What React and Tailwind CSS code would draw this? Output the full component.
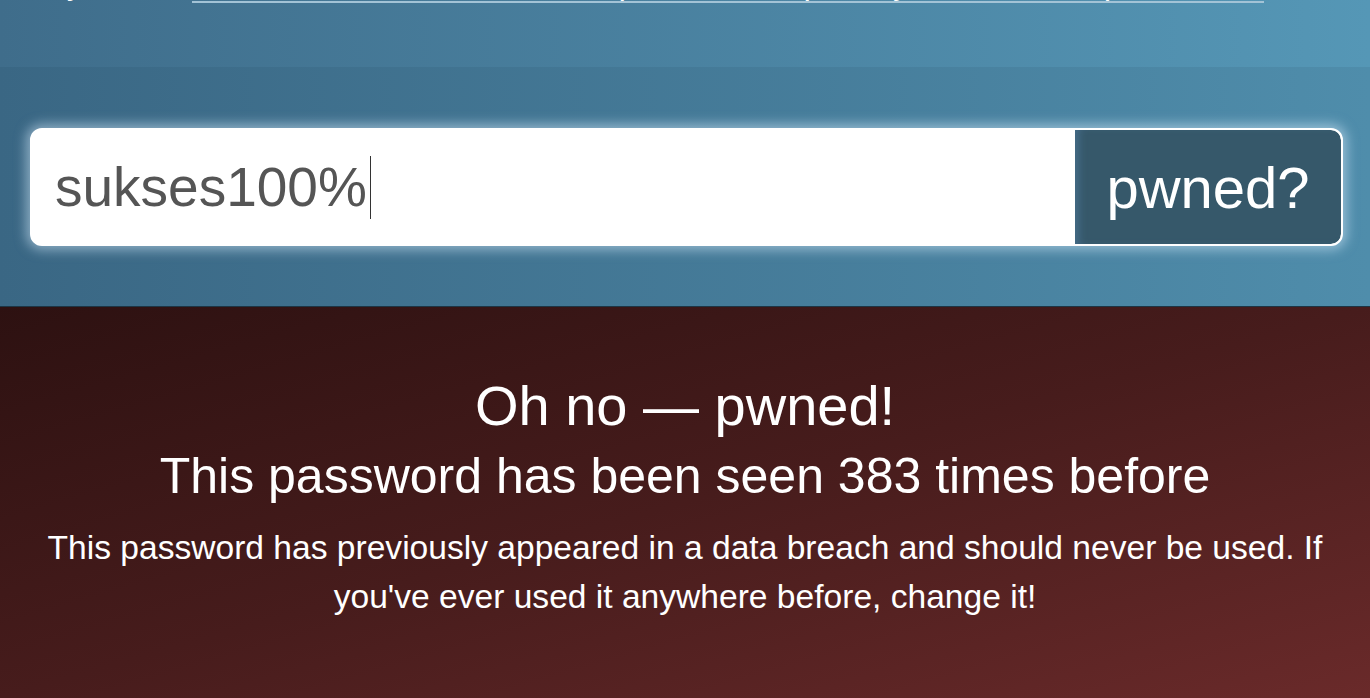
export default function App() {
  return (
    <div className="w-[1370px] h-[698px] overflow-hidden" style={{ fontFamily: '"Liberation Sans", Arial, sans-serif' }}>
      <div className="h-[67px] overflow-hidden bg-gradient-to-r from-[#3f6d8b] to-[#5597b6]">
        <p className="mt-[-37px] pl-[50px] text-[33.6px] leading-[40px] text-white whitespace-nowrap">
          systems. <a className="border-b-2 border-[#a3c3d6]">Read more about how HIBP protects the privacy of searched passwords</a>.
        </p>
      </div>
      <div className="h-[240px] border-b border-[#1c3545] bg-gradient-to-r from-[#3a6784] to-[#4f8dab] flex flex-col">
        <div className="mt-[61px] ml-[30px] mr-[27px] h-[118px] flex rounded-[12px] border-2 border-white bg-white shadow-[0_0_12px_4px_rgba(220,240,255,0.5)] overflow-hidden">
          <div className="flex-1 flex items-center pl-[23px] text-[55px] text-[#555555]">
            <span>sukses100%</span>
            <span className="w-[1px] h-[63px] bg-[#333333] ml-[3px]" />
          </div>
          <button className="w-[266px] bg-[#36586a] text-white text-[58px] flex items-center justify-center shadow-[inset_8px_0_8px_-4px_rgba(70,110,140,0.9)] rounded-r-[10px]">
            pwned?
          </button>
        </div>
      </div>
      <div className="h-[391px] bg-gradient-to-br from-[#2d1111] via-[#471c1c] to-[#6a2a2a] text-white text-center flex flex-col items-center">
        <h2 className="mt-[67px] text-[56px] leading-[64px]">Oh no — pwned!</h2>
        <h3 className="mt-[10px] text-[50px] leading-[56px]">This password has been seen 383 times before</h3>
        <p className="mt-[19px] px-[36px] text-[33.6px] leading-[49px]">
          This password has previously appeared in a data breach and should never be used. If you've ever used it anywhere before, change it!
        </p>
      </div>
    </div>
  );
}
